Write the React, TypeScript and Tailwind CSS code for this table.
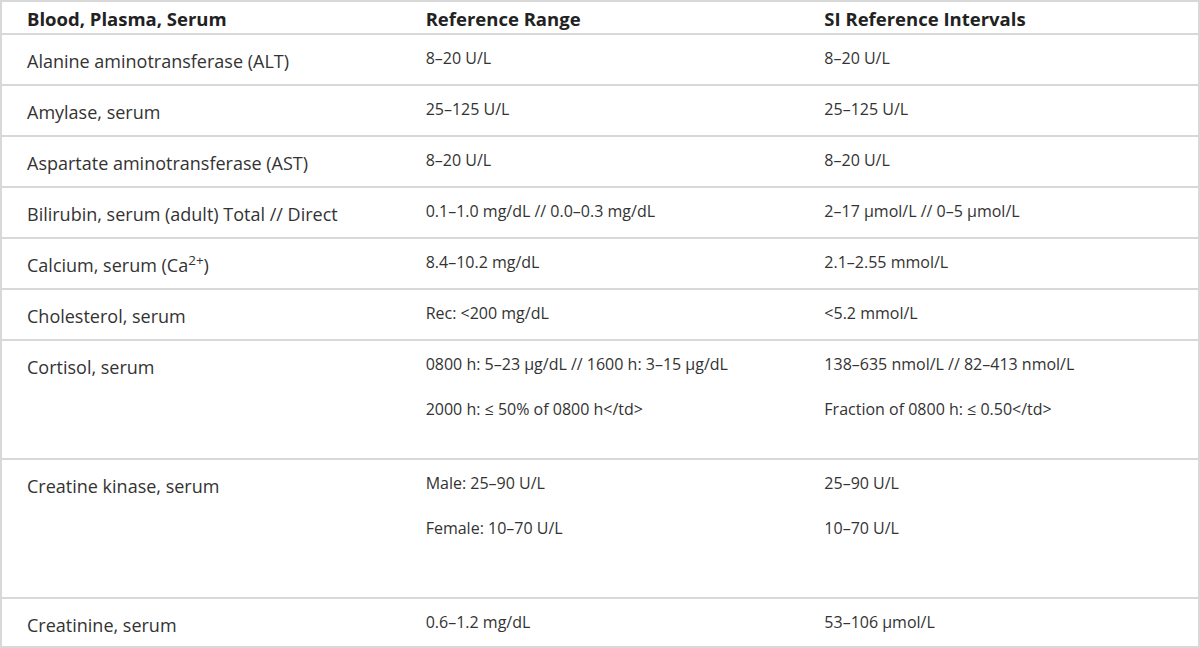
type Row = {
  name: React.ReactNode
  range: string[]
  si: string[]
  height: string
}

const rows: Row[] = [
  { name: 'Alanine aminotransferase (ALT)', range: ['8–20 U/L'], si: ['8–20 U/L'], height: 'h-[51px]' },
  { name: 'Amylase, serum', range: ['25–125 U/L'], si: ['25–125 U/L'], height: 'h-[51px]' },
  { name: 'Aspartate aminotransferase (AST)', range: ['8–20 U/L'], si: ['8–20 U/L'], height: 'h-[51px]' },
  {
    name: 'Bilirubin, serum (adult) Total // Direct',
    range: ['0.1–1.0 mg/dL // 0.0–0.3 mg/dL'],
    si: ['2–17 µmol/L // 0–5 µmol/L'],
    height: 'h-[51px]',
  },
  {
    name: (
      <>
        Calcium, serum (Ca<sup>2+</sup>)
      </>
    ),
    range: ['8.4–10.2 mg/dL'],
    si: ['2.1–2.55 mmol/L'],
    height: 'h-[51px]',
  },
  { name: 'Cholesterol, serum', range: ['Rec: <200 mg/dL'], si: ['<5.2 mmol/L'], height: 'h-[51px]' },
  {
    name: 'Cortisol, serum',
    range: ['0800 h: 5–23 µg/dL // 1600 h: 3–15 µg/dL', '2000 h: ≤ 50% of 0800 h</td>'],
    si: ['138–635 nmol/L // 82–413 nmol/L', 'Fraction of 0800 h: ≤ 0.50</td>'],
    height: 'h-[119px]',
  },
  {
    name: 'Creatine kinase, serum',
    range: ['Male: 25–90 U/L', 'Female: 10–70 U/L'],
    si: ['25–90 U/L', '10–70 U/L'],
    height: 'h-[139px]',
  },
  { name: 'Creatinine, serum', range: ['0.6–1.2 mg/dL'], si: ['53–106 µmol/L'], height: 'h-[47px]' },
]

function Values({ lines }: { lines: string[] }) {
  return (
    <div className="flex flex-col gap-[18px] pl-[25px] pt-[10px] text-[16px] leading-[27px] text-[#333]">
      {lines.map((line) => (
        <p key={line}>{line}</p>
      ))}
    </div>
  )
}

export default function App() {
  return (
    <div className="h-[648px] w-[1200px] bg-white font-['Open_Sans',sans-serif]">
      <div className="border-2 border-[#d8d8d8]">
        <div className="grid h-[33px] grid-cols-3 items-center border-b-2 border-[#d8d8d8] pt-[2px] text-[18.5px] font-bold leading-[27px] text-[#222]">
          <div className="pl-[25px]">Blood, Plasma, Serum</div>
          <div className="pl-[25px]">Reference Range</div>
          <div className="pl-[25px]">SI Reference Intervals</div>
        </div>

        {rows.map((row, i) => (
          <div
            key={i}
            className={`grid grid-cols-3 ${row.height} ${
              i < rows.length - 1 ? 'border-b-2 border-[#d8d8d8]' : ''
            }`}
          >
            <div className="pl-[25px] pt-[13px] text-[18px] leading-[27px] text-[#333]">{row.name}</div>
            <Values lines={row.range} />
            <Values lines={row.si} />
          </div>
        ))}
      </div>
    </div>
  )
}
